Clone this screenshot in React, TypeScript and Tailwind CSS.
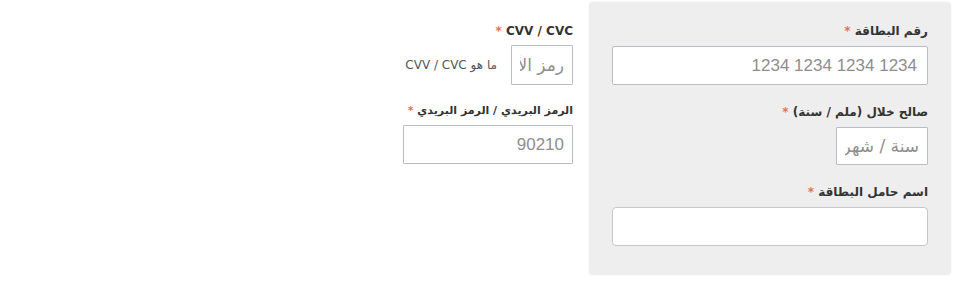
import React from 'react';

const font = { fontFamily: '"Segoe UI", Tahoma, "DejaVu Sans", "Noto Sans", sans-serif' };
const num = { fontFamily: '"Liberation Sans", Arial, sans-serif' };

function Label({ text, small }: { text: string; small?: boolean }) {
  return (
    <label
      className={`block h-[15px] whitespace-nowrap font-bold leading-[15px] text-[#333] ${small ? 'text-[11px]' : 'text-[12px]'}`}
    >
      {text} <span className="text-[#e2725b]">*</span>
    </label>
  );
}

export default function App() {
  return (
    <div dir="rtl" className="flex h-[285px] w-[961px] items-start gap-4 bg-white pr-[10px] pt-[2px]" style={font}>
      <div className="w-[362px] rounded-[4px] bg-[#eeeeee] px-[23px] pb-[29px] pt-[22px] shadow-[0_0_2px_rgba(0,0,0,0.08)]">
        <div>
          <Label text="رقم البطاقة" />
          <input
            dir="ltr"
            style={num}
            className="mt-[7px] block h-[39px] w-full rounded-[2px] border border-[#b4bfc9] bg-white px-[10px] text-right text-[17px] text-[#555] placeholder:text-[#8e8e8e] focus:outline-none"
            placeholder="1234 1234 1234 1234"
          />
        </div>
        <div className="mt-[20px]">
          <Label text="صالح خلال (ملم / سنة)" />
          <input
            className="mt-[7px] block h-[38px] w-[92px] rounded-[1px] border border-[#b4bfc9] bg-white px-[8px] text-[17px] text-[#555] placeholder:text-[#8e8e8e] focus:outline-none"
            placeholder="سنة / شهر"
          />
        </div>
        <div className="mt-[20px]">
          <Label text="اسم حامل البطاقة" />
          <input className="mt-[7px] block h-[39px] w-full rounded-[4px] border border-[#c6c6c6] bg-white px-[11px] text-[16px] focus:outline-none" />
        </div>
      </div>

      <div className="w-[170px] pt-[22px]">
        <div>
          <Label text="CVV / CVC" />
          <div className="mt-[6px] flex items-center gap-[14px]">
            <input
              className="block h-[40px] w-[62px] rounded-[1px] border border-[#b4bfc9] bg-white px-[8px] text-[17px] text-[#555] placeholder:text-[#8e8e8e] focus:outline-none"
              placeholder="رمز الأمان"
            />
            <span className="whitespace-nowrap text-[12px] text-[#555]">ما هو CVV / CVC</span>
          </div>
        </div>
        <div className="mt-[18px]">
          <Label text="الرمز البريدي / الرمز البريدي" small />
          <input
            dir="ltr"
            style={num}
            className="mt-[7px] block h-[39px] w-full rounded-[1px] border border-[#b4bfc9] bg-white px-[8px] text-right text-[17px] text-[#555] placeholder:text-[#8e8e8e] focus:outline-none"
            placeholder="90210"
          />
        </div>
      </div>
    </div>
  );
}
